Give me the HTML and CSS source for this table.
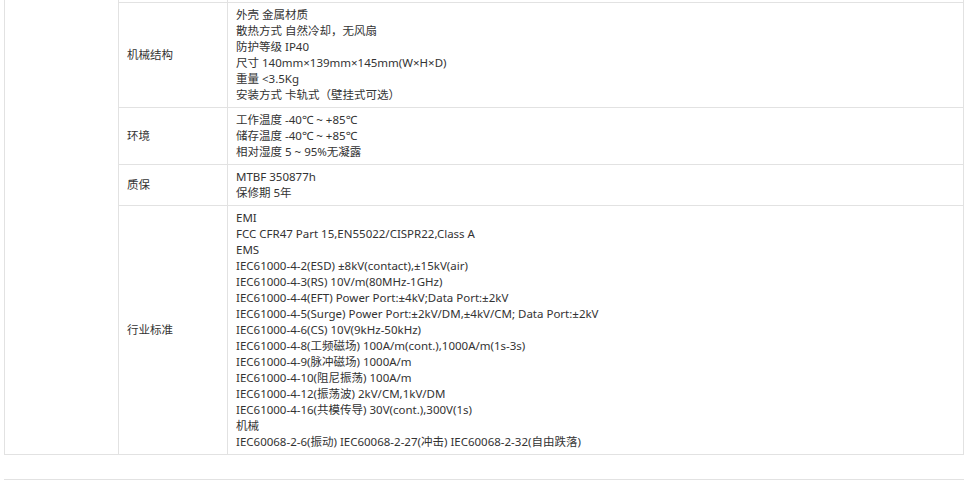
FILE: index.html
```html
<!DOCTYPE html>
<html lang="zh-CN">
<head>
<meta charset="utf-8">
<title>产品参数</title>
<link rel="stylesheet" href="styles.css">
</head>
<body>
<div class="page">
  <table class="spec">
    <colgroup>
      <col class="c-group">
      <col class="c-name">
      <col class="c-value">
    </colgroup>
    <tbody>
      <tr class="prev">
        <td class="group" rowspan="6"></td>
        <td class="name">&nbsp;</td>
        <td class="value">&nbsp;</td>
      </tr>
      <tr>
        <td class="name">机械结构</td>
        <td class="value">外壳 金属材质<br>散热方式 自然冷却，无风扇<br>防护等级 IP40<br>尺寸 140mm×139mm×145mm(W×H×D)<br>重量 &lt;3.5Kg<br>安装方式 卡轨式（壁挂式可选）</td>
      </tr>
      <tr>
        <td class="name">环境</td>
        <td class="value">工作温度 -40℃ ~ +85℃<br>储存温度 -40℃ ~ +85℃<br>相对湿度 5 ~ 95%无凝露</td>
      </tr>
      <tr>
        <td class="name">质保</td>
        <td class="value">MTBF 350877h<br>保修期 5年</td>
      </tr>
      <tr>
        <td class="name">行业标准</td>
        <td class="value">EMI<br>FCC CFR47 Part 15,EN55022/CISPR22,Class A<br>EMS<br>IEC61000-4-2(ESD) ±8kV(contact),±15kV(air)<br>IEC61000-4-3(RS) 10V/m(80MHz-1GHz)<br>IEC61000-4-4(EFT) Power Port:±4kV;Data Port:±2kV<br>IEC61000-4-5(Surge) Power Port:±2kV/DM,±4kV/CM; Data Port:±2kV<br>IEC61000-4-6(CS) 10V(9kHz-50kHz)<br>IEC61000-4-8(工频磁场) 100A/m(cont.),1000A/m(1s-3s)<br>IEC61000-4-9(脉冲磁场) 1000A/m<br>IEC61000-4-10(阻尼振荡) 100A/m<br>IEC61000-4-12(振荡波) 2kV/CM,1kV/DM<br>IEC61000-4-16(共模传导) 30V(cont.),300V(1s)<br>机械<br>IEC60068-2-6(振动) IEC60068-2-27(冲击) IEC60068-2-32(自由跌落)</td>
      </tr>
    </tbody>
  </table>
  <div class="divider"></div>
</div>
</body>
</html>
```

FILE: styles.css
```css
html, body {
  margin: 0;
  padding: 0;
  background: #fff;
}

body {
  font-family: "Noto Sans", "Noto Sans CJK SC", sans-serif;
  font-size: 11.5px;
  line-height: 16px;
  color: #333;
  overflow: hidden;
}

.page {
  padding: 0 4px;
  width: 960px;
}

.spec {
  width: 960px;
  border-collapse: collapse;
  table-layout: fixed;
  margin-top: -23px;
}

.c-group { width: 114px; }
.c-name { width: 109px; }

.spec td {
  border: 1px solid #e2e2e2;
  padding: 4px 8px;
  vertical-align: middle;
  text-align: left;
}

.divider {
  margin-top: 24px;
  border-top: 1px solid #e2e2e2;
  width: 960px;
}
```
